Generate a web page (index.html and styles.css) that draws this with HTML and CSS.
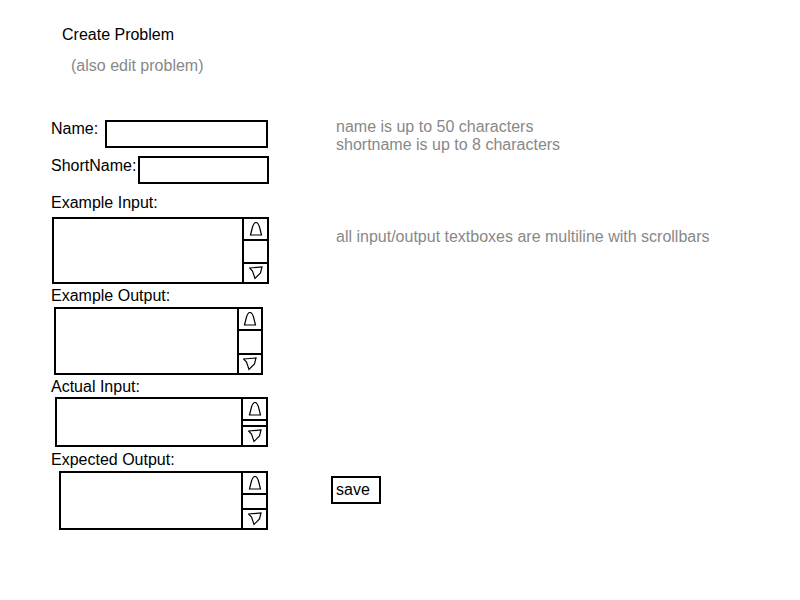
FILE: index.html
```html
<!DOCTYPE html>
<html lang="en">
<head>
<meta charset="UTF-8">
<meta name="viewport" content="width=device-width, initial-scale=1.0">
<title>Create Problem</title>
<link rel="stylesheet" href="styles.css">
</head>
<body>

  <!-- header -->
  <h1 class="title">Create Problem</h1>
  <p class="subtitle">(also edit problem)</p>

  <div class="page">
    <!-- form -->
    <div class="form">
      <div class="row row-name">
        <span class="label">Name:</span>
        <div class="field field-name"></div>
      </div>
      <div class="row row-short">
        <span class="label">ShortName:</span>
        <div class="field field-short"></div>
      </div>

      <div class="label label-block lb1">Example Input:</div>
      <div class="textbox tb1">
        <div class="area"></div>
        <div class="scroll">
          <div class="btn-up"><svg viewBox="0 0 14 14" width="14" height="14"><path d="M1.5 13 L3.5 5 Q5 0.5 7 0.5 Q9 0.5 10.5 5 L12.5 13 Z" /></svg></div>
          <div class="track"></div>
          <div class="btn-down"><svg viewBox="0 0 14 14" width="14" height="14"><path d="M0.5 2 L13 1 L11.5 7 L6 12.5 L3.5 5 Z" /></svg></div>
        </div>
      </div>

      <div class="label label-block lb2">Example Output:</div>
      <div class="textbox tb2">
        <div class="area"></div>
        <div class="scroll">
          <div class="btn-up"><svg viewBox="0 0 14 14" width="14" height="14"><path d="M1.5 13 L3.5 5 Q5 0.5 7 0.5 Q9 0.5 10.5 5 L12.5 13 Z" /></svg></div>
          <div class="track"></div>
          <div class="btn-down"><svg viewBox="0 0 14 14" width="14" height="14"><path d="M0.5 2 L13 1 L11.5 7 L6 12.5 L3.5 5 Z" /></svg></div>
        </div>
      </div>

      <div class="label label-block lb3">Actual Input:</div>
      <div class="textbox tb3">
        <div class="area"></div>
        <div class="scroll">
          <div class="btn-up"><svg viewBox="0 0 14 14" width="14" height="14"><path d="M1.5 13 L3.5 5 Q5 0.5 7 0.5 Q9 0.5 10.5 5 L12.5 13 Z" /></svg></div>
          <div class="track"></div>
          <div class="btn-down"><svg viewBox="0 0 14 14" width="14" height="14"><path d="M0.5 2 L13 1 L11.5 7 L6 12.5 L3.5 5 Z" /></svg></div>
        </div>
      </div>

      <div class="label label-block lb4">Expected Output:</div>
      <div class="textbox tb4">
        <div class="area"></div>
        <div class="scroll">
          <div class="btn-up"><svg viewBox="0 0 14 14" width="14" height="14"><path d="M1.5 13 L3.5 5 Q5 0.5 7 0.5 Q9 0.5 10.5 5 L12.5 13 Z" /></svg></div>
          <div class="track"></div>
          <div class="btn-down"><svg viewBox="0 0 14 14" width="14" height="14"><path d="M0.5 2 L13 1 L11.5 7 L6 12.5 L3.5 5 Z" /></svg></div>
        </div>
      </div>
    </div>

    <!-- notes -->
    <div class="notes">
      <p class="note">name is up to 50 characters</p>
      <p class="note">shortname is up to 8 characters</p>
      <p class="note note-multi">all input/output textboxes are multiline with scrollbars</p>
      <div class="save">save</div>
    </div>
  </div>

</body>
</html>
```

FILE: styles.css
```css
body {
  margin: 0;
  font-family: "Liberation Sans", Arial, sans-serif;
  font-size: 16px;
  line-height: 18px;
  color: #000;
  background: #fff;
}

.title {
  margin: 0;
  padding: 26px 0 0 62px;
  font-size: 16px;
  font-weight: normal;
  line-height: 18px;
}

.subtitle {
  margin: 13px 0 0 71px;
  color: #888;
}

.page {
  display: flex;
  margin-top: 43px;
}

/* left side */
.form {
  width: 218px;
  padding: 2px 0 0 51px;
}

.row {
  display: flex;
  align-items: flex-start;
}

.row-short {
  margin-top: 8px;
}

.row-short .label {
  padding-top: 1px;
}

.field {
  height: 28px;
  box-sizing: border-box;
  border: 2px solid #000;
}

.field-name {
  margin-left: 7px;
  width: 163px;
}

.field-short {
  margin-left: 2px;
  width: 131px;
}

.lb1 { margin-top: 10px; }
.lb2 { margin-top: 3px; }
.lb3 { margin-top: 3px; }
.lb4 { margin-top: 4px; }

.textbox {
  display: flex;
  box-sizing: border-box;
}

.area {
  flex: 1;
  border: 2px solid #000;
  border-right: none;
}

.scroll {
  width: 27px;
  box-sizing: border-box;
  border: 2px solid #000;
  display: flex;
  flex-direction: column;
}

.btn-up,
.btn-down {
  display: flex;
  justify-content: center;
  align-items: center;
}

.btn-up {
  height: 20px;
  border-bottom: 2px solid #000;
}

.btn-down {
  height: 18px;
  border-top: 2px solid #000;
}

.track {
  flex: 1;
}

.scroll svg path {
  fill: none;
  stroke: #000;
  stroke-width: 1.2;
}

.tb1 { margin: 5px 0 0 1px; width: 217px; height: 67px; }
.tb2 { margin: 2px 0 0 3px; width: 209px; height: 68px; }
.tb3 { margin: 1px 0 0 4px; width: 213px; height: 50px; }
.tb4 { margin: 2px 0 0 8px; width: 209px; height: 59px; }

.tb2 .scroll { width: 26px; }

/* right side */
.notes {
  padding-left: 62px;
}

.note {
  margin: 0;
  padding-left: 5px;
  color: #888;
}

.note-multi {
  margin-top: 74px;
}

.save {
  margin-top: 230px;
  width: 50px;
  height: 28px;
  box-sizing: border-box;
  border: 2px solid #000;
  padding: 3px 0 0 3px;
}
```
